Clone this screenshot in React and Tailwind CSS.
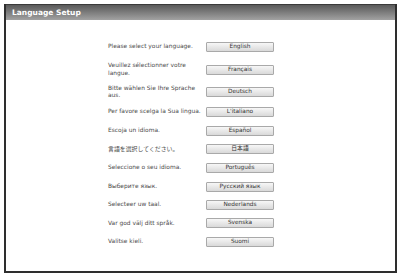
import React from "react";

const rows = [
  { label: "Please select your language.", btn: "English", h: "h-[20px]" },
  { label: "Veuillez sélectionner votre langue.", btn: "Français", h: "h-[25px]" },
  { label: "Bitte wählen Sie Ihre Sprache aus.", btn: "Deutsch", h: "h-[20px]" },
  { label: "Per favore scelga la Sua lingua.", btn: "L'italiano", h: "h-[19px]" },
  { label: "Escoja un idioma.", btn: "Español", h: "h-[19px]" },
  { label: "言語を選択してください。", btn: "日本語", h: "h-[18.5px]" },
  { label: "Seleccione o seu idioma.", btn: "Português", h: "h-[19px]" },
  { label: "Выберите язык.", btn: "Русский язык", h: "h-[18.5px]" },
  { label: "Selecteer uw taal.", btn: "Nederlands", h: "h-[18px]" },
  { label: "Var god välj ditt språk.", btn: "Svenska", h: "h-[18.5px]" },
  { label: "Valitse kieli.", btn: "Suomi", h: "h-[19px]" },
];

export default function App() {
  return (
    <div
      className="w-[400px] h-[275px] bg-white pt-[4px] pl-[4px] pr-[3px] pb-[2px]"
      style={{ fontFamily: '"DejaVu Sans", "Noto Sans CJK JP", sans-serif' }}
    >
      <div className="h-full flex flex-col border-l-2 border-r-2 border-b-2 border-[#2e2e2e]">
        <div className="h-[16px] flex items-center pl-[6px] bg-gradient-to-b from-[#5a5a5a] to-[#a2a2a2] border-t border-[#3a3a3a]">
          <span className="text-white font-bold text-[7.5px] leading-none">Language Setup</span>
        </div>
        <div className="flex-1 flex flex-col pt-[17px] pl-[102px]">
          {rows.map((r) => (
            <div key={r.btn} className={`flex items-center ${r.h}`}>
              <div className="w-[98px] text-[5.9px] leading-[7.5px] text-[#4a4a4a]">{r.label}</div>
              <button className="w-[68px] h-[10px] flex items-center justify-center border border-[#a9a9a9] rounded-[1px] bg-gradient-to-b from-[#f7f7f7] to-[#d9d9d9] text-[5.8px] leading-none text-[#333]">
                {r.btn}
              </button>
            </div>
          ))}
        </div>
      </div>
    </div>
  );
}
